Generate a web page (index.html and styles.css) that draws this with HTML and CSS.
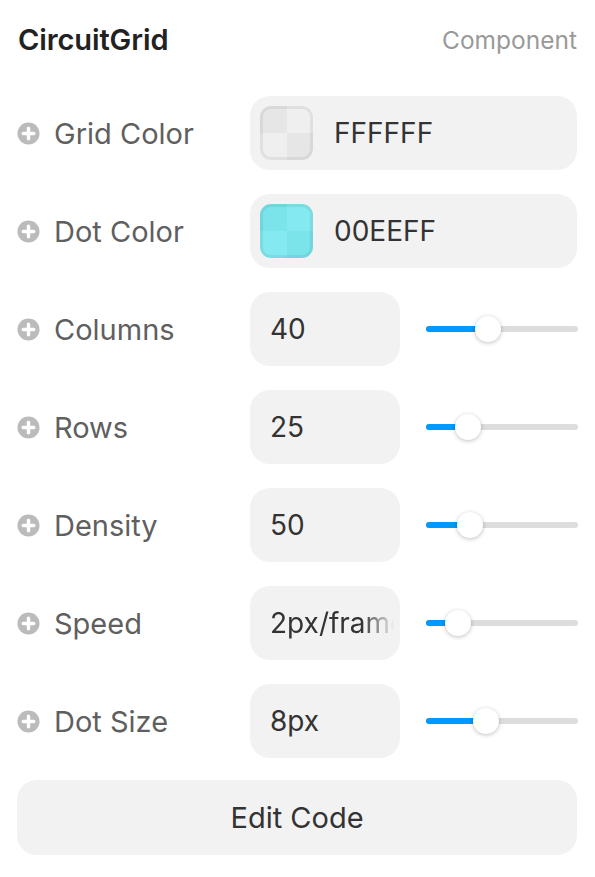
FILE: index.html
```html
<!DOCTYPE html>
<html>
<head>
<meta charset="utf-8">
<link rel="stylesheet" href="styles.css">
</head>
<body>
<div class="panel">
  <div class="header">
    <div class="title">CircuitGrid</div>
    <div class="kind">Component</div>
  </div>
  <div class="rows">
    <div class="row">
      <div class="label"><svg class="plus" viewBox="0 0 24 24"><circle cx="12" cy="12" r="11.5" fill="#bbbbbb"/><path d="M12 6.5v11M6.5 12h11" stroke="#fff" stroke-width="3.6" stroke-linecap="round"/></svg><span>Grid Color</span></div>
      <div class="field color-field">
        <div class="swatch swatch-white"><i></i><i></i><i></i><i></i></div>
        <span class="hex">FFFFFF</span>
      </div>
    </div>
    <div class="row">
      <div class="label"><svg class="plus" viewBox="0 0 24 24"><circle cx="12" cy="12" r="11.5" fill="#bbbbbb"/><path d="M12 6.5v11M6.5 12h11" stroke="#fff" stroke-width="3.6" stroke-linecap="round"/></svg><span>Dot Color</span></div>
      <div class="field color-field">
        <div class="swatch swatch-cyan"><i></i><i></i><i></i><i></i></div>
        <span class="hex">00EEFF</span>
      </div>
    </div>
    <div class="row">
      <div class="label"><svg class="plus" viewBox="0 0 24 24"><circle cx="12" cy="12" r="11.5" fill="#bbbbbb"/><path d="M12 6.5v11M6.5 12h11" stroke="#fff" stroke-width="3.6" stroke-linecap="round"/></svg><span>Columns</span></div>
      <div class="control">
        <div class="field num-field"><span class="num">40</span></div>
        <div class="slider"><div class="track"><div class="fill" style="width: 62px"></div><div class="thumb" style="left: 62px"></div></div></div>
      </div>
    </div>
    <div class="row">
      <div class="label"><svg class="plus" viewBox="0 0 24 24"><circle cx="12" cy="12" r="11.5" fill="#bbbbbb"/><path d="M12 6.5v11M6.5 12h11" stroke="#fff" stroke-width="3.6" stroke-linecap="round"/></svg><span>Rows</span></div>
      <div class="control">
        <div class="field num-field"><span class="num">25</span></div>
        <div class="slider"><div class="track"><div class="fill" style="width: 42px"></div><div class="thumb" style="left: 42px"></div></div></div>
      </div>
    </div>
    <div class="row">
      <div class="label"><svg class="plus" viewBox="0 0 24 24"><circle cx="12" cy="12" r="11.5" fill="#bbbbbb"/><path d="M12 6.5v11M6.5 12h11" stroke="#fff" stroke-width="3.6" stroke-linecap="round"/></svg><span>Density</span></div>
      <div class="control">
        <div class="field num-field"><span class="num">50</span></div>
        <div class="slider"><div class="track"><div class="fill" style="width: 44px"></div><div class="thumb" style="left: 44px"></div></div></div>
      </div>
    </div>
    <div class="row">
      <div class="label"><svg class="plus" viewBox="0 0 24 24"><circle cx="12" cy="12" r="11.5" fill="#bbbbbb"/><path d="M12 6.5v11M6.5 12h11" stroke="#fff" stroke-width="3.6" stroke-linecap="round"/></svg><span>Speed</span></div>
      <div class="control">
        <div class="field num-field"><span class="num clip">2px/frame</span></div>
        <div class="slider"><div class="track"><div class="fill" style="width: 32px"></div><div class="thumb" style="left: 32px"></div></div></div>
      </div>
    </div>
    <div class="row">
      <div class="label"><svg class="plus" viewBox="0 0 24 24"><circle cx="12" cy="12" r="11.5" fill="#bbbbbb"/><path d="M12 6.5v11M6.5 12h11" stroke="#fff" stroke-width="3.6" stroke-linecap="round"/></svg><span>Dot Size</span></div>
      <div class="control">
        <div class="field num-field"><span class="num">8px</span></div>
        <div class="slider"><div class="track"><div class="fill" style="width: 60px"></div><div class="thumb" style="left: 60px"></div></div></div>
      </div>
    </div>
  </div>
  <div class="button">Edit Code</div>
</div>
</body>
</html>
```
FILE: styles.css
```css
* { box-sizing: border-box; }
html, body { margin: 0; padding: 0; background: #fff; }
body { font-family: Inter, "Noto Sans", sans-serif; }
.panel { width: 595px; padding: 0 17px 0 17px; }
.header {
  display: flex; justify-content: space-between; align-items: center;
  height: 80px; padding-right: 1px;
}
.title { font-size: 29px; font-weight: 600; color: #222; letter-spacing: -0.1px; margin-left: 1px; margin-top: -2px; }
.kind { font-size: 24.5px; color: #999; }
.rows { display: flex; flex-direction: column; gap: 24px; margin-top: 16px; }
.row { display: grid; grid-template-columns: 233px 1fr; height: 74px; align-items: center; }
.label { display: flex; align-items: center; gap: 14px; font-size: 29px; color: #5f5f5f; font-weight: 400; }
.plus { width: 23px; height: 23px; flex: none; }
.field { background: #f2f2f2; border-radius: 20px; height: 74px; display: flex; align-items: center; }
.color-field { padding-left: 10px; gap: 21px; margin-right: 1px; }
.hex { font-size: 28px; color: #333; font-weight: 400; }
.num { font-size: 28px; color: #333; font-weight: 400; }
.swatch {
  width: 53px; height: 54px; border-radius: 11px; overflow: hidden;
  display: grid; grid-template-columns: 1fr 1fr; grid-template-rows: 1fr 1fr;
  position: relative;
}
.swatch::after { content: ""; position: absolute; inset: 0; border-radius: 11px; box-shadow: inset 0 0 0 3px rgba(0,0,0,0.06); }
.swatch-white i:nth-child(1), .swatch-white i:nth-child(4) { background: #e6e6e6; }
.swatch-white i:nth-child(2), .swatch-white i:nth-child(3) { background: #efefef; }
.swatch-cyan i:nth-child(1), .swatch-cyan i:nth-child(4) { background: #7be3ea; }
.swatch-cyan i:nth-child(2), .swatch-cyan i:nth-child(3) { background: #84e9f0; }
.control { display: flex; align-items: center; gap: 26px; }
.num-field { width: 150px; padding-left: 20px; overflow: hidden; }
.clip { white-space: nowrap; -webkit-mask-image: linear-gradient(to right, #000 92px, transparent 124px); mask-image: linear-gradient(to right, #000 92px, transparent 124px); }
.slider { flex: 1; height: 30px; display: flex; align-items: center; }
.track { position: relative; width: 100%; height: 6px; border-radius: 3px; background: #dddddd; }
.fill { height: 6px; border-radius: 3px; background: #0099ff; }
.thumb {
  position: absolute; top: 50%; width: 26px; height: 26px; margin: -13px 0 0 -13px;
  border-radius: 50%; background: #fff; box-shadow: 0 1px 4px rgba(0,0,0,0.25);
}
.button {
  margin-top: 22px; margin-right: 1px; height: 75px; border-radius: 20px; background: #f2f2f2;
  display: flex; align-items: center; justify-content: center;
  font-size: 29px; font-weight: 400; color: #333;
}
```
